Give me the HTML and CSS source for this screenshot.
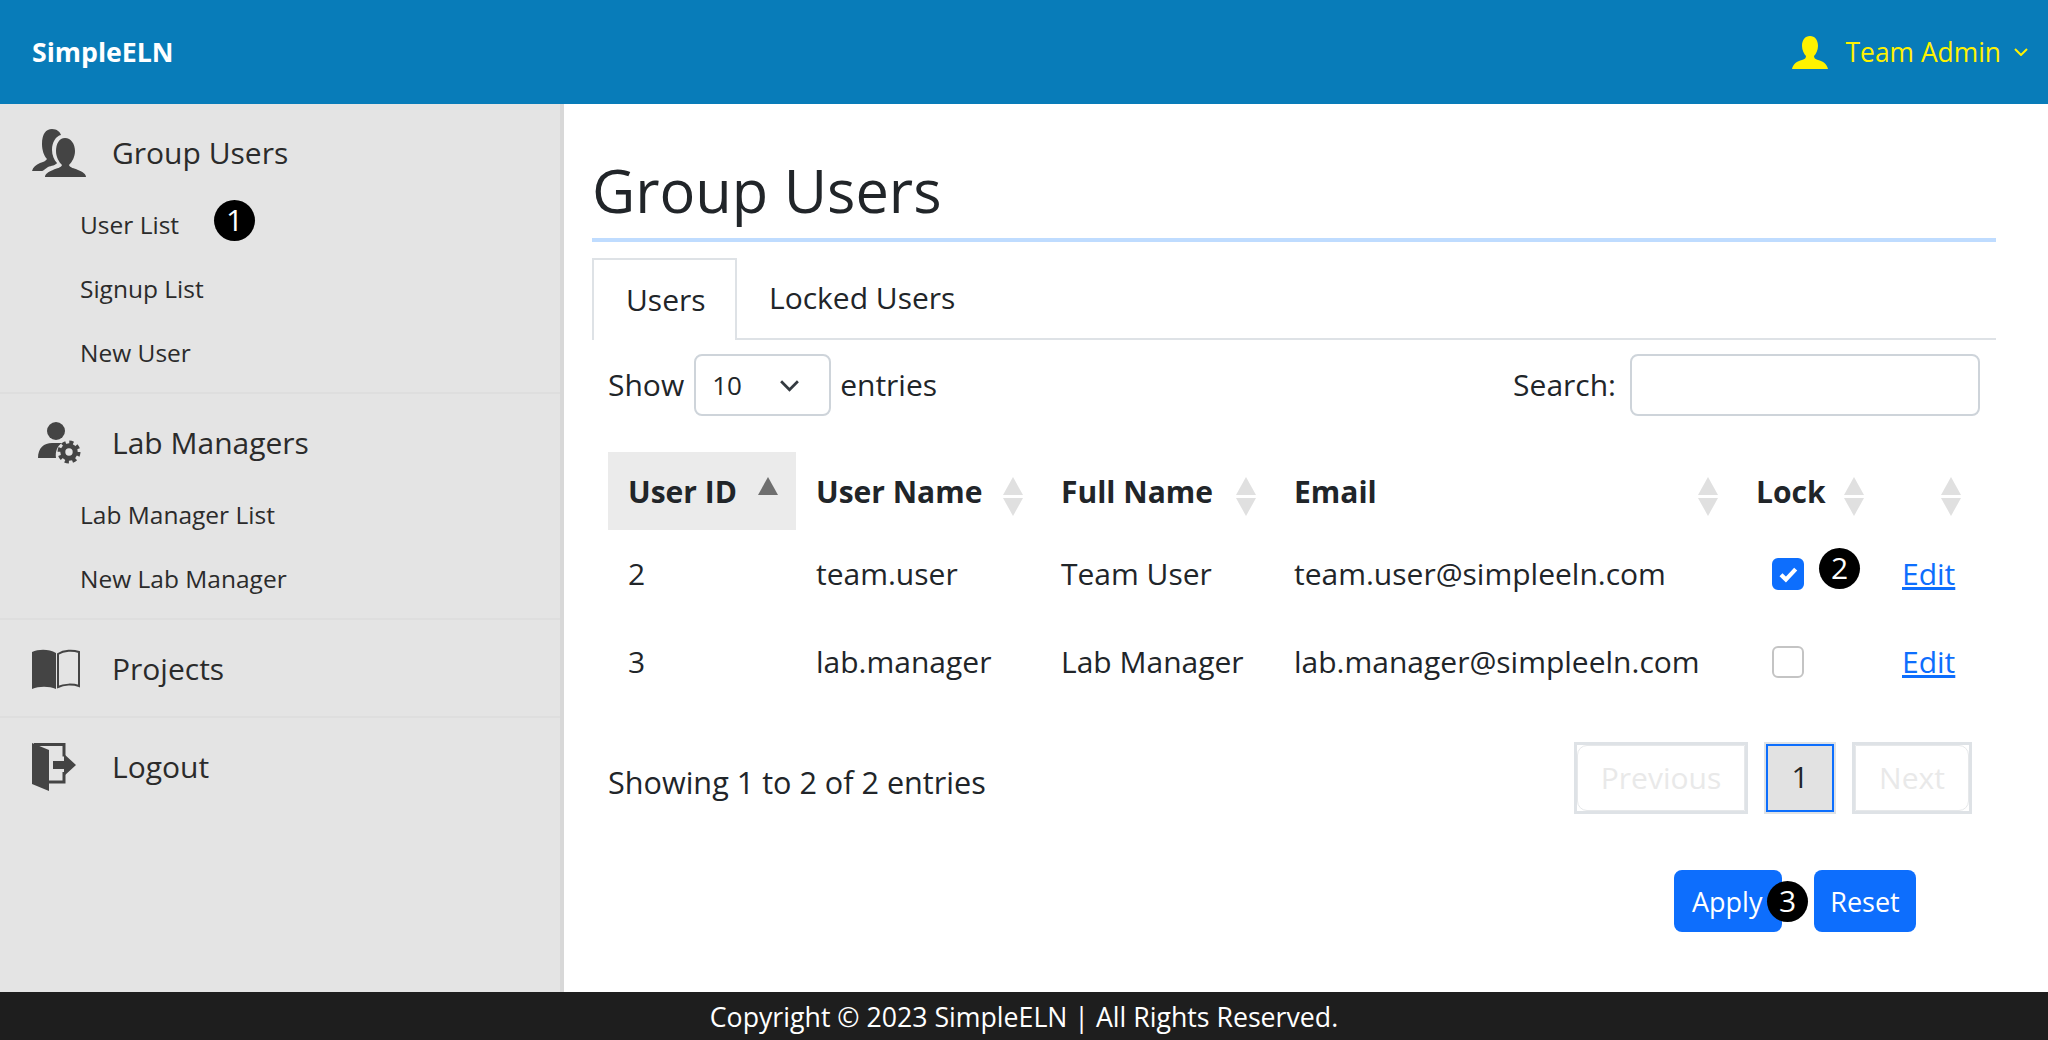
FILE: index.html
```html
<!DOCTYPE html>
<html lang="en">
<head>
<meta charset="utf-8">
<title>SimpleELN</title>
<link rel="stylesheet" href="styles.css">
</head>
<body>
<header class="topbar">
  <a class="brand">SimpleELN</a>
  <div class="account">
    <svg class="account-icon" viewBox="0 0 36 33"><path d="M18 0c5 0 8 4 8 10 0 4-2 8-4 10 0 2 1 3 4 4 5 1 9 4 10 9H0c1-5 5-8 10-9 3-1 4-2 4-4-2-2-4-6-4-10C10 4 13 0 18 0z"/></svg>
    <span class="account-name">Team Admin</span>
    <svg class="account-caret" viewBox="0 0 14 8"><path d="M1 1l6 6 6-6"/></svg>
  </div>
</header>
<div class="shell">
  <aside class="sidebar">
    <section class="nav-group group-users">
      <div class="nav-head">
        <svg class="nav-icon" viewBox="0 0 54 48"><path d="M20 0c5 0 8 3 9 6-5 1-9 7-9 15 0 5 2 10 5 13-1 2-6 3-9 4-3 2-5 4-6 4H0c1-4 4-6 8-8 3-1 6-2 7-4-3-3-5-9-5-15C10 5 14 0 20 0z"/><path d="M33 9c6 0 10 6 10 13 0 6-3 11-6 14 1 3 5 3 9 5 5 2 8 4 8 7H13c0-3 3-5 8-7 4-2 8-2 9-5-3-3-6-8-6-14 0-7 3-13 9-13z"/></svg>
        <span>Group Users</span>
      </div>
      <a class="nav-link">User List</a>
      <a class="nav-link">Signup List</a>
      <a class="nav-link">New User</a>
      <span class="marker marker-one">1</span>
    </section>
    <section class="nav-group group-labs">
      <div class="nav-head">
        <svg class="nav-icon" viewBox="0 0 54 42"><circle cx="24" cy="9" r="9"/><path d="M6 36c0-10 6-15 14-15h10c-5 3-7 9-6 15z"/><circle class="gear-teeth" cx="37" cy="30" r="9.5"/><circle class="gear-ring" cx="37" cy="30" r="6.2"/></svg>
        <span>Lab Managers</span>
      </div>
      <a class="nav-link">Lab Manager List</a>
      <a class="nav-link">New Lab Manager</a>
    </section>
    <section class="nav-group group-single">
      <div class="nav-head">
        <svg class="nav-icon" viewBox="0 0 54 40"><path d="M0 3c7-3 17-3 24 1v36c-7-3-17-3-24 0z"/><path class="book-page" d="M26 5c6-4 15-4 21-2v34c-6-2-15-2-21 1z"/></svg>
        <span>Projects</span>
      </div>
    </section>
    <section class="nav-group group-last">
      <div class="nav-head">
        <svg class="nav-icon" viewBox="0 0 54 48"><path d="M0 0l17 7v41L0 41z"/><path class="door-frame" d="M2 1.500h30v12M32 29v10H17"/><path d="M21 18h11v-7l12 11-12 11v-7H21z"/></svg>
        <span>Logout</span>
      </div>
    </section>
  </aside>
  <main class="content">
    <h1 class="page-title">Group Users</h1>
    <nav class="tabs">
      <a class="tab tab-active">Users</a>
      <a class="tab">Locked Users</a>
    </nav>
    <div class="panel">
      <div class="toolbar">
        <label class="length">Show
          <span class="select"><span>10</span><svg viewBox="0 0 20 12"><path d="M2 2l8 8 8-8"/></svg></span>
          entries</label>
        <label class="search">Search: <span class="search-input"></span></label>
      </div>
      <table class="grid">
        <colgroup><col class="c1"><col class="c2"><col class="c3"><col class="c4"><col class="c5"><col class="c6"></colgroup>
        <thead>
          <tr>
            <th class="sorted">User ID<i class="sort-up active"></i></th>
            <th>User Name<i class="sort-up"></i><i class="sort-down"></i></th>
            <th>Full Name<i class="sort-up"></i><i class="sort-down"></i></th>
            <th>Email<i class="sort-up"></i><i class="sort-down"></i></th>
            <th>Lock<i class="sort-up"></i><i class="sort-down"></i></th>
            <th><i class="sort-up"></i><i class="sort-down"></i></th>
          </tr>
        </thead>
        <tbody>
          <tr>
            <td>2</td><td>team.user</td><td>Team User</td><td>team.user@simpleeln.com</td>
            <td class="lock-cell"><span class="check checked"><svg viewBox="0 0 20 20"><path d="M5 10.500l3.500 3.500 7-7.500"/></svg></span><span class="marker marker-two">2</span></td>
            <td><a class="edit">Edit</a></td>
          </tr>
          <tr>
            <td>3</td><td>lab.manager</td><td>Lab Manager</td><td>lab.manager@simpleeln.com</td>
            <td class="lock-cell"><span class="check"></span></td>
            <td><a class="edit">Edit</a></td>
          </tr>
        </tbody>
      </table>
      <div class="table-foot">
        <div class="info">Showing 1 to 2 of 2 entries</div>
        <div class="pager">
          <a class="page-btn off prev">Previous</a>
          <a class="page-btn current">1</a>
          <a class="page-btn off next">Next</a>
        </div>
      </div>
      <div class="actions">
        <button class="btn btn-apply">Apply<span class="marker marker-three">3</span></button>
        <button class="btn">Reset</button>
      </div>
    </div>
  </main>
</div>
<footer class="footer">Copyright © 2023 SimpleELN | All Rights Reserved.</footer>
</body>
</html>
```
FILE: styles.css
```css
* { box-sizing: border-box; }
html, body { height: 100%; }
body {
  margin: 0;
  height: 100vh;
  overflow: hidden;
  display: flex;
  flex-direction: column;
  font-family: "Open Sans", "Noto Sans", "Liberation Sans", sans-serif;
  font-stretch: 90%;
  font-size: 30px;
  line-height: 42px;
  color: #212529;
  background: #fff;
}
.topbar {
  height: 104px;
  flex: none;
  background: #087cb9;
  display: flex;
  align-items: center;
  justify-content: space-between;
  padding: 0 20px 0 32px;
}
.brand { color: #fff; font-weight: 700; font-size: 26.700px; }
.account { display: flex; align-items: center; color: #fff200; }
.account-icon { width: 36px; height: 33px; fill: #fff200; margin-right: 18px; }
.account-name { font-size: 26.400px; }
.account-caret { width: 14px; height: 8px; margin-left: 13px; fill: none; stroke: #fff200; stroke-width: 2; }

.shell { flex: 1; display: flex; min-height: 0; }
.sidebar {
  width: 564px;
  flex: none;
  background: #e4e4e4;
  border-right: 4px solid #d8d8d8;
  color: #2b2b2b;
}
.nav-group { position: relative; border-bottom: 2px solid #dedede; }
.group-users { height: 290px; padding-top: 22px; }
.group-labs { height: 226px; padding-top: 22px; }
.group-single { height: 98px; padding-top: 22px; }
.group-last { border-bottom: 0; padding-top: 22px; }
.nav-head {
  display: flex;
  align-items: center;
  height: 54px;
  padding-left: 32px;
  font-size: 30px;
  margin-bottom: 13px;
}
.nav-head span { margin-left: 26px; }
.nav-icon { width: 54px; height: 48px; fill: #444; flex: none; }
.gear-teeth { fill: none; stroke: #444; stroke-width: 4; stroke-dasharray: 4 3.460; }
.gear-ring { fill: #e4e4e4; stroke: #444; stroke-width: 5; }
.group-labs .nav-icon { height: 42px; }
.book-page { fill: none; stroke: #444; stroke-width: 2; }
.door-frame { fill: none; stroke: #444; stroke-width: 3; }
.nav-link { display: block; height: 64px; line-height: 64px; padding-left: 80px; font-size: 24.500px; }

.marker {
  position: absolute;
  width: 41px;
  height: 41px;
  border-radius: 50%;
  background: #000;
  color: #fff;
  font-size: 30px;
  line-height: 39px;
  text-align: center;
}
.marker-one { left: 214px; top: 96px; }

.content { flex: 1; min-width: 0; padding: 0 52px 0 28px; }
.page-title {
  margin: 0;
  height: 138px;
  padding-top: 48px;
  font-size: 59.500px;
  font-weight: 400;
  line-height: 76px;
  border-bottom: 4px solid #bfdcff;
  color: #212529;
}
.tabs {
  display: flex;
  margin-top: 16px;
  height: 82px;
  border-bottom: 2px solid #dee2e6;
}
.tab { padding: 0 32px; line-height: 79px; }
.tab-active {
  padding: 0 32px;
  height: 82px;
  width: 145px;
  background: #fff;
  border: 2px solid #dee2e6;
  border-bottom: 0;
}
.panel { padding: 14px 16px 0; }
.toolbar { display: flex; justify-content: space-between; height: 62px; align-items: center; }
.length, .search { display: flex; align-items: center; }
.select {
  width: 137px;
  height: 62px;
  margin: 0 9px 0 10px;
  border: 2px solid #ced4da;
  border-radius: 8px;
  display: flex;
  align-items: center;
  justify-content: space-between;
  padding: 0 29px 0 16px;
  font-size: 26px;
}
.select svg { width: 21px; height: 13px; fill: none; stroke: #343a40; stroke-width: 2.600; }
.search-input {
  width: 350px;
  height: 62px;
  margin-left: 14px;
  border: 2px solid #ced4da;
  border-radius: 8px;
}
.grid { width: 1371px; margin-top: 36px; border-collapse: collapse; table-layout: fixed; }
.c1 { width: 188px; }
.c2 { width: 245px; }
.c3 { width: 233px; }
.c4 { width: 462px; }
.c5 { width: 146px; }
.c6 { width: 97px; }
.grid th {
  position: relative;
  height: 78px;
  padding: 2px 20px 0;
  text-align: left;
  font-weight: 700;
}
.sorted { background: #ebebeb; }
.grid td { height: 88px; padding: 0 20px; }
.sort-up, .sort-down {
  position: absolute;
  right: 18px;
  width: 0;
  height: 0;
  border-left: 10px solid transparent;
  border-right: 10px solid transparent;
}
.sort-up { top: 25px; border-bottom: 18px solid #e0e0e0; }
.sort-down { top: 46px; border-top: 18px solid #e0e0e0; }
.sort-up.active { border-bottom-color: #6f6f6f; }
.lock-cell { position: relative; }
.check {
  display: block;
  width: 32px;
  height: 32px;
  margin-left: 16px;
  border: 2px solid #c4c4c4;
  border-radius: 6px;
}
.check.checked { background: #0d6efd; border-color: #0d6efd; }
.check svg { display: block; width: 28px; height: 28px; fill: none; stroke: #fff; stroke-width: 3; }
.marker-two { left: 83px; top: 18px; }
.edit { color: #0d6efd; text-decoration: underline; }
.table-foot { display: flex; justify-content: space-between; align-items: center; height: 72px; margin-top: 36px; width: 1364px; }
.info { padding-top: 8px; font-size: 30.600px; }
.pager { display: flex; gap: 16px; }
.page-btn {
  position: relative;
  height: 72px;
  line-height: 66px;
  text-align: center;
  border: 3px solid #dee2e6;
}
.off { color: #e9e9e9; }
.off::before {
  content: "";
  position: absolute;
  inset: 0;
  border: 1px solid #e6e8ea;
}
.prev::before { border-radius: 10px 0 0 10px; }
.next::before { border-radius: 0 10px 10px 0; }
.prev { width: 174px; }
.next { width: 120px; }
.current {
  width: 72px;
  background: #e2e2e2;
  border-width: 2px;
  box-shadow: inset 0 0 0 2px #0d6efd;
}
.actions { display: flex; justify-content: flex-end; gap: 32px; margin-top: 56px; padding-right: 64px; }
.btn {
  position: relative;
  height: 62px;
  width: 102px;
  padding: 0;
  border: 0;
  border-radius: 8px;
  background: #0d6efd;
  color: #fff;
  font-family: inherit;
  font-stretch: inherit;
  font-size: 27px;
}
.btn-apply { width: 108px; text-align: left; padding-left: 18px; }
.marker-three { left: 93px; top: 11px; }
.footer {
  height: 48px;
  flex: none;
  background: #1e1e1e;
  color: #fff;
  text-align: center;
  font-size: 26.700px;
  line-height: 50px;
}
```
